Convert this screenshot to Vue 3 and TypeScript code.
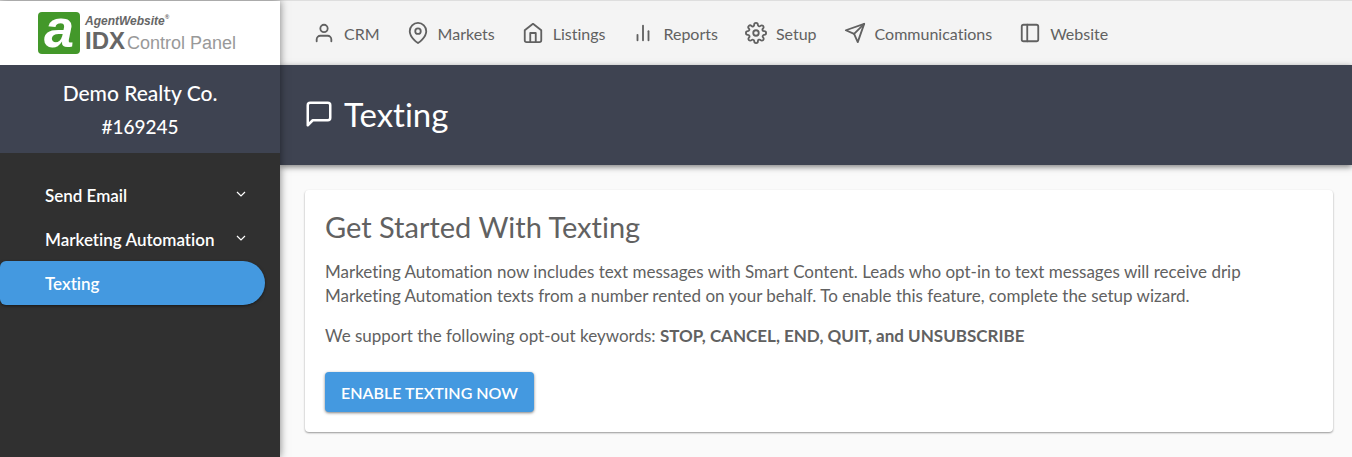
<script setup lang="ts">
interface NavItem {
  label: string
  paths: string[]
}

interface SideItem {
  label: string
  expandable: boolean
  active: boolean
}

const navItems: NavItem[] = [
  { label: 'CRM', paths: ['M20 21v-2a4 4 0 0 0-4-4H8a4 4 0 0 0-4 4v2', 'M12 3a4 4 0 1 0 0 8a4 4 0 0 0 0-8z'] },
  { label: 'Markets', paths: ['M21 10c0 7-9 13-9 13s-9-6-9-13a9 9 0 0 1 18 0z', 'M12 7a3 3 0 1 0 0 6a3 3 0 0 0 0-6z'] },
  { label: 'Listings', paths: ['M3 9l9-7 9 7v11a2 2 0 0 1-2 2H5a2 2 0 0 1-2-2z', 'M9 22V12h6v10'] },
  { label: 'Reports', paths: ['M18 20V10', 'M12 20V4', 'M6 20v-6'] },
  {
    label: 'Setup',
    paths: [
      'M12 9a3 3 0 1 0 0 6a3 3 0 0 0 0-6z',
      'M19.4 15a1.65 1.65 0 0 0 .33 1.82l.06.06a2 2 0 1 1-2.83 2.83l-.06-.06a1.65 1.65 0 0 0-2.8 1.17V21a2 2 0 0 1-4 0v-.09A1.65 1.65 0 0 0 9 19.4a1.65 1.65 0 0 0-1.82.33l-.06.06a2 2 0 1 1-2.83-2.83l.06-.06A1.65 1.65 0 0 0 3.17 14H3a2 2 0 0 1 0-4h.09A1.65 1.65 0 0 0 4.6 9a1.65 1.65 0 0 0-.33-1.82l-.06-.06a2 2 0 1 1 2.83-2.83l.06.06A1.65 1.65 0 0 0 10 3.09V3a2 2 0 0 1 4 0v.09a1.65 1.65 0 0 0 2.82 1.18l.06-.06a2 2 0 1 1 2.83 2.83l-.06.06A1.65 1.65 0 0 0 20.91 10H21a2 2 0 0 1 0 4h-.09a1.65 1.65 0 0 0-1.51 1z',
    ],
  },
  { label: 'Communications', paths: ['M22 2L15 22l-4-9-9-4z', 'M22 2L11 13'] },
  { label: 'Website', paths: ['M5 3h14a2 2 0 0 1 2 2v14a2 2 0 0 1-2 2H5a2 2 0 0 1-2-2V5a2 2 0 0 1 2-2z', 'M9 3v18'] },
]

const sideItems: SideItem[] = [
  { label: 'Send Email', expandable: true, active: false },
  { label: 'Marketing Automation', expandable: true, active: false },
  { label: 'Texting', expandable: false, active: true },
]
</script>

<template>
  <div class="app">
    <aside class="sidebar">
      <a class="logo" href="#" aria-label="AgentWebsite IDX Control Panel">
        <span class="logo-mark">a</span>
        <span class="logo-words">
          <span class="logo-top">AgentWebsite<small>®</small></span>
          <span class="logo-bottom"><b>IDX</b><span>Control Panel</span></span>
        </span>
      </a>
      <div class="company">
        <div class="company-name">Demo Realty Co.</div>
        <div class="company-id">#169245</div>
      </div>
      <nav class="side-nav" aria-label="Communications">
        <a v-for="item in sideItems" :key="item.label" href="#" class="side-link" :class="{ active: item.active }">
          <span>{{ item.label }}</span>
          <svg v-if="item.expandable" class="chevron" viewBox="0 0 10 10" aria-hidden="true">
            <path d="M1 2l4 4 4-4" />
          </svg>
        </a>
      </nav>
    </aside>

    <div class="main">
      <nav class="top-nav" aria-label="Main">
        <a v-for="item in navItems" :key="item.label" href="#" class="top-link">
          <svg class="icon" viewBox="0 0 24 24" aria-hidden="true">
            <path v-for="d in item.paths" :key="d" :d="d" />
          </svg>
          <span>{{ item.label }}</span>
        </a>
      </nav>
      <header class="page-head">
        <svg class="icon head-icon" viewBox="0 0 24 24" aria-hidden="true">
          <path d="M21 15a2 2 0 0 1-2 2H7l-4 4V5a2 2 0 0 1 2-2h14a2 2 0 0 1 2 2z" />
        </svg>
        <h1>Texting</h1>
      </header>
      <main class="content">
        <section class="card">
          <h2>Get Started With Texting</h2>
          <p>
            Marketing Automation now includes text messages with Smart Content. Leads who opt-in to text messages will receive drip
            Marketing Automation texts from a number rented on your behalf. To enable this feature, complete the setup wizard.
          </p>
          <p>
            We support the following opt-out keywords: <strong>STOP, CANCEL, END, QUIT, and UNSUBSCRIBE</strong>
          </p>
          <button type="button" class="primary">ENABLE TEXTING NOW</button>
        </section>
      </main>
    </div>
  </div>
</template>

<style>
body {
  background: #fafafa;
}
</style>

<style scoped>
.app {
  display: flex;
  min-height: 100vh;
  box-sizing: border-box;
  border-top: 1px solid #dedede;
  font-family: Lato, "Open Sans", sans-serif;
  font-size: 17px;
  font-variant-ligatures: none;
  color: #616161;
}
a {
  color: inherit;
  text-decoration: none;
}
.sidebar {
  position: relative;
  z-index: 2;
  flex: 0 0 280px;
  background: #303030;
  color: #fff;
  box-shadow: 0 0 8px rgba(0, 0, 0, 0.5);
}
.logo {
  display: flex;
  align-items: center;
  gap: 5px;
  height: 64px;
  box-sizing: border-box;
  padding-left: 38px;
  background: #fff;
  font-family: "Liberation Sans", Arial, sans-serif;
  color: #666;
}
.logo-mark {
  width: 42px;
  height: 42px;
  border-radius: 4px;
  background: #43982a;
  color: #fff;
  font-size: 54px;
  line-height: 32px;
  font-weight: 700;
  font-style: italic;
  text-align: center;
}
.logo-words {
  display: flex;
  flex-direction: column;
  padding-top: 4px;
  white-space: nowrap;
}
.logo-top {
  font-size: 12px;
  line-height: 14px;
  font-weight: 700;
  font-style: italic;
}
.logo-top small {
  font-size: 6px;
  line-height: 7px;
  vertical-align: top;
}
.logo-bottom {
  display: flex;
  align-items: baseline;
  gap: 2px;
  font-size: 18px;
  line-height: 26px;
  color: #999;
}
.logo-bottom b {
  font-size: 24px;
  color: #666;
}
.company {
  padding: 11px 16px 9px;
  background: #3e4351;
  text-align: center;
  font-weight: 500;
  line-height: 34px;
}
.company-name {
  font-size: 21px;
}
.company-id {
  font-size: 19px;
}
.side-nav {
  padding: 20px 15px 20px 0;
}
.side-link {
  display: flex;
  align-items: center;
  justify-content: space-between;
  height: 44px;
  box-sizing: border-box;
  padding: 0 19px 0 45px;
  font-weight: 600;
}
.side-link.active {
  border-radius: 6px 22px 22px 6px;
  background: #4499e0;
  box-shadow: 0 1px 3px rgba(0, 0, 0, 0.5);
}
.chevron {
  width: 10px;
  height: 10px;
  fill: none;
  stroke: #fff;
  stroke-width: 1.2;
}
.main {
  flex: 1;
  min-width: 0;
}
.top-nav {
  display: flex;
  align-items: center;
  gap: 27px;
  height: 64px;
  padding-left: 33px;
  background: #f4f4f4;
  font-size: 16px;
}
.top-link {
  display: flex;
  align-items: center;
  gap: 9px;
}
.icon {
  flex: none;
  width: 22px;
  height: 22px;
  fill: none;
  stroke: currentColor;
  stroke-width: 2;
  stroke-linecap: round;
  stroke-linejoin: round;
}
.page-head {
  position: relative;
  display: flex;
  align-items: center;
  gap: 10px;
  height: 100px;
  box-sizing: border-box;
  padding: 0 24px 2px;
  background: #3e4351;
  color: #fff;
  box-shadow: 0 2px 6px rgba(0, 0, 0, 0.5);
}
.head-icon {
  width: 30px;
  height: 30px;
  stroke-width: 2;
}
h1 {
  margin: 0;
  font-size: 33px;
  font-weight: 400;
}
.content {
  padding: 25px 19px 25px 25px;
}
.card {
  padding: 20px;
  border-radius: 4px;
  background: #fff;
  box-shadow: 0 1px 2px rgba(0, 0, 0, 0.4);
}
h2 {
  margin: 0 0 16px;
  font-size: 29px;
  line-height: 34px;
  font-weight: 400;
}
p {
  margin: 0 0 16px;
  line-height: 24px;
  font-weight: 400;
}
strong {
  font-weight: 700;
}
.primary {
  display: block;
  height: 40px;
  margin-top: 24px;
  padding: 0 16px;
  border: 0;
  border-radius: 4px;
  background: #4499e0;
  color: #fff;
  font: inherit;
  font-size: 16px;
  font-weight: 600;
  box-shadow: 0 1px 3px rgba(0, 0, 0, 0.5);
}
</style>
